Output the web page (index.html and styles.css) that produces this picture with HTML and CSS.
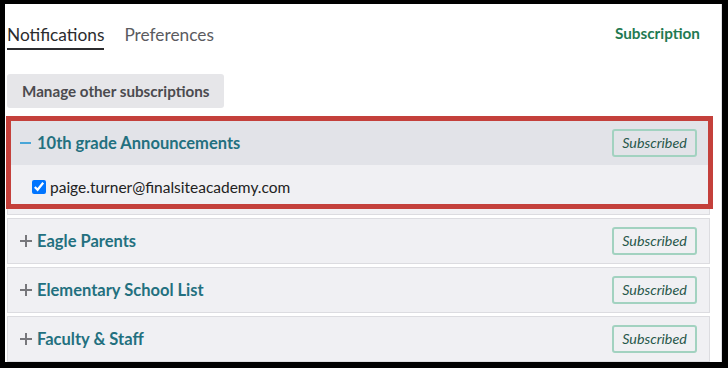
FILE: index.html
```html
<!DOCTYPE html>
<html lang="en">
<head>
    <meta charset="UTF-8">
    <title>Subscriptions</title>
    <link rel="stylesheet" href="styles.css">
</head>
<body>
    <div class="frame">
        <div class="topbar">
            <div class="tabs">
                <span class="tab active">Notifications</span>
                <span class="tab">Preferences</span>
            </div>
            <span class="sub-title">Subscription</span>
        </div>

        <button class="manage-btn">Manage other subscriptions</button>

        <div class="list">
            <div class="card open">
                <div class="card-head">
                    <span class="toggle minus"></span>
                    <span class="card-title">10th grade Announcements</span>
                    <span class="badge">Subscribed</span>
                </div>
                <div class="card-body">
                    <label class="email"><input type="checkbox" checked> paige.turner@finalsiteacademy.com</label>
                </div>
                <div class="highlight"></div>
            </div>

            <div class="card">
                <div class="card-head">
                    <span class="toggle plus"></span>
                    <span class="card-title">Eagle Parents</span>
                    <span class="badge">Subscribed</span>
                </div>
            </div>

            <div class="card">
                <div class="card-head">
                    <span class="toggle plus"></span>
                    <span class="card-title">Elementary School List</span>
                    <span class="badge">Subscribed</span>
                </div>
            </div>

            <div class="card">
                <div class="card-head">
                    <span class="toggle plus"></span>
                    <span class="card-title">Faculty &amp; Staff</span>
                    <span class="badge">Subscribed</span>
                </div>
            </div>
        </div>
    </div>
</body>
</html>
```

FILE: styles.css
```css
body {
    margin: 0;
    background: #000;
    font-family: Lato, "Open Sans", sans-serif;
    overflow: hidden;
}

.frame {
    margin: 4px 6px 0 5px;
    height: 358px;
    background: #fff;
    border-right: 1px solid #dedee2;
    padding: 0 11px 0 2px;
    overflow: hidden;
}

.topbar {
    display: flex;
    justify-content: space-between;
    align-items: flex-start;
    height: 50px;
}

.tabs {
    display: flex;
    gap: 20px;
    padding-top: 20px;
}

.tab {
    font-size: 17.3px;
    color: #5b5b5f;
    line-height: 22px;
    padding-bottom: 2px;
}

.tab.active {
    color: #2b2b2e;
    border-bottom: 2px solid #2b2b2e;
}

.sub-title {
    margin-top: 20px;
    margin-right: 10px;
    font-size: 15.3px;
    font-weight: bold;
    color: #1f7a52;
}

.manage-btn {
    display: block;
    margin-top: 20px;
    height: 34px;
    padding: 0 15px;
    border: none;
    border-radius: 3px;
    background: #e6e6e9;
    color: #4b4b4f;
    font-family: inherit;
    font-size: 15.2px;
    font-weight: bold;
}

.list {
    margin-top: 12px;
    display: flex;
    flex-direction: column;
    gap: 3px;
}

.card {
    position: relative;
    border: 1px solid #dcdce0;
    background: #f0f0f3;
}

.card-head {
    display: flex;
    align-items: center;
    height: 44px;
    padding: 0 12px 0 12px;
}

.open .card-head {
    background: #e2e3e8;
}

.toggle {
    position: relative;
    width: 12px;
    height: 12px;
    margin-right: 5px;
}

.toggle::before,
.toggle::after {
    content: "";
    position: absolute;
    background: #77777b;
}

.toggle::before {
    left: 0;
    right: 0;
    top: 5px;
    height: 2px;
}

.plus::after {
    top: 0;
    bottom: 0;
    left: 5px;
    width: 2px;
}

.minus::before {
    background: #49a6d8;
    right: 1px;
}

.card-title {
    flex: 1;
    font-size: 16.5px;
    font-weight: bold;
    color: #23707f;
}

.badge {
    width: 81px;
    height: 24px;
    line-height: 24px;
    text-align: center;
    border: 2px solid #a2d2c0;
    border-radius: 3px;
    font-size: 14.3px;
    font-style: italic;
    color: #27574a;
}

.card-body {
    height: 49px;
    padding-left: 24px;
}

.email {
    display: flex;
    align-items: center;
    gap: 4px;
    height: 43px;
    font-size: 15.5px;
    color: #222;
}

.email input {
    margin: 0;
    width: 14px;
    height: 14px;
}

.highlight {
    position: absolute;
    top: -5px;
    left: -2px;
    right: -4px;
    bottom: 5px;
    border: 5px solid #c4403b;
}
```
